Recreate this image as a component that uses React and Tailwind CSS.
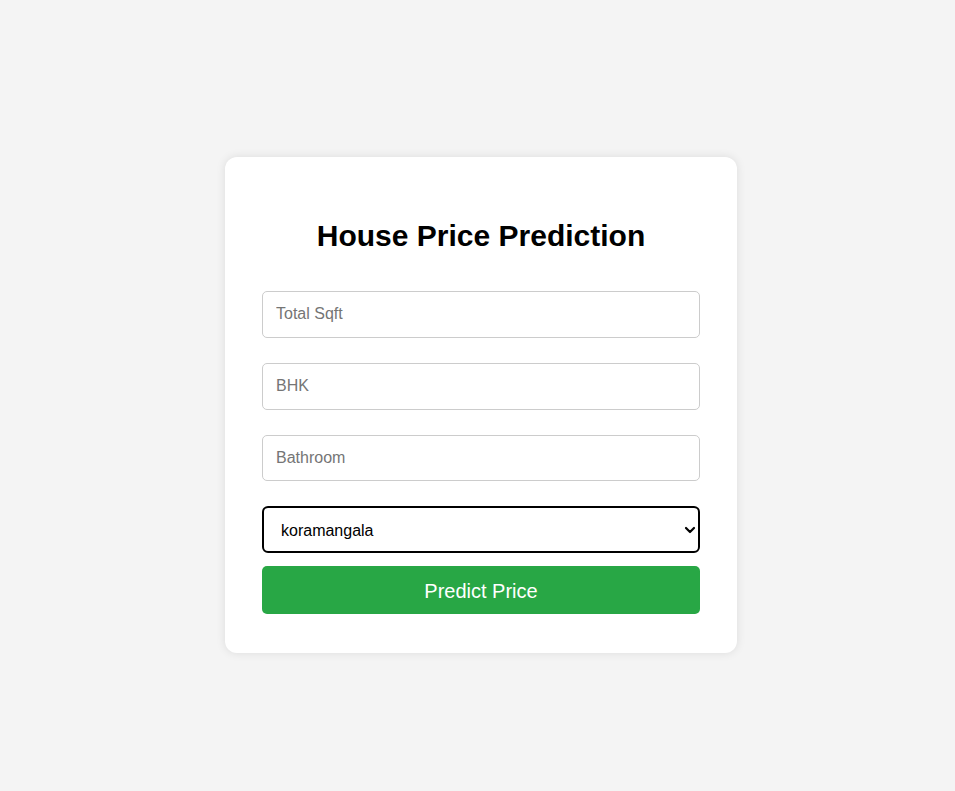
export default function App() {
  const font = { fontFamily: '"Liberation Sans", Arial, sans-serif' };
  const inputCls =
    "h-[47px] w-full border border-[#ccc] rounded-[5px] px-[13px] text-[16px] text-black placeholder:text-[#757575] outline-none";
  return (
    <div className="min-h-screen w-full bg-[#f4f4f4] pt-[157px] pl-[225px]" style={font}>
      <div className="w-[512px] h-[496px] bg-white rounded-[12px] shadow-[0_0_10px_rgba(0,0,0,0.1)] px-[37px] pt-[40px] pb-[39px] flex flex-col">
        <h2 className="mt-[22px] text-[30px] leading-[34px] font-bold text-black text-center">House Price Prediction</h2>
        <input type="number" placeholder="Total Sqft" className={"mt-[38px] " + inputCls} />
        <input type="number" placeholder="BHK" className={"mt-[25px] " + inputCls} />
        <input type="number" placeholder="Bathroom" className={"mt-[25px] " + inputCls} />
        <div className="relative mt-[25px] h-[47px] w-full">
          <select
            defaultValue="koramangala"
            className="appearance-none h-full w-full border-2 border-black rounded-[6px] pl-[17px] pr-[30px] pt-[2px] text-[16px] text-black bg-white outline-none"
          >
            <option value="koramangala">koramangala</option>
            <option value="whitefield">whitefield</option>
            <option value="indiranagar">indiranagar</option>
          </select>
          <svg className="pointer-events-none absolute right-[4px] top-[19px]" width="12" height="10" viewBox="0 0 12 10">
            <path d="M2 3 L6 7 L10 3" fill="none" stroke="black" strokeWidth="2.2" strokeLinecap="round" strokeLinejoin="round" />
          </svg>
        </div>
        <button className="mt-[13px] h-[48px] w-full bg-[#28a745] rounded-[5px] text-white text-[20px] pt-[1px]">
          Predict Price
        </button>
      </div>
    </div>
  );
}
